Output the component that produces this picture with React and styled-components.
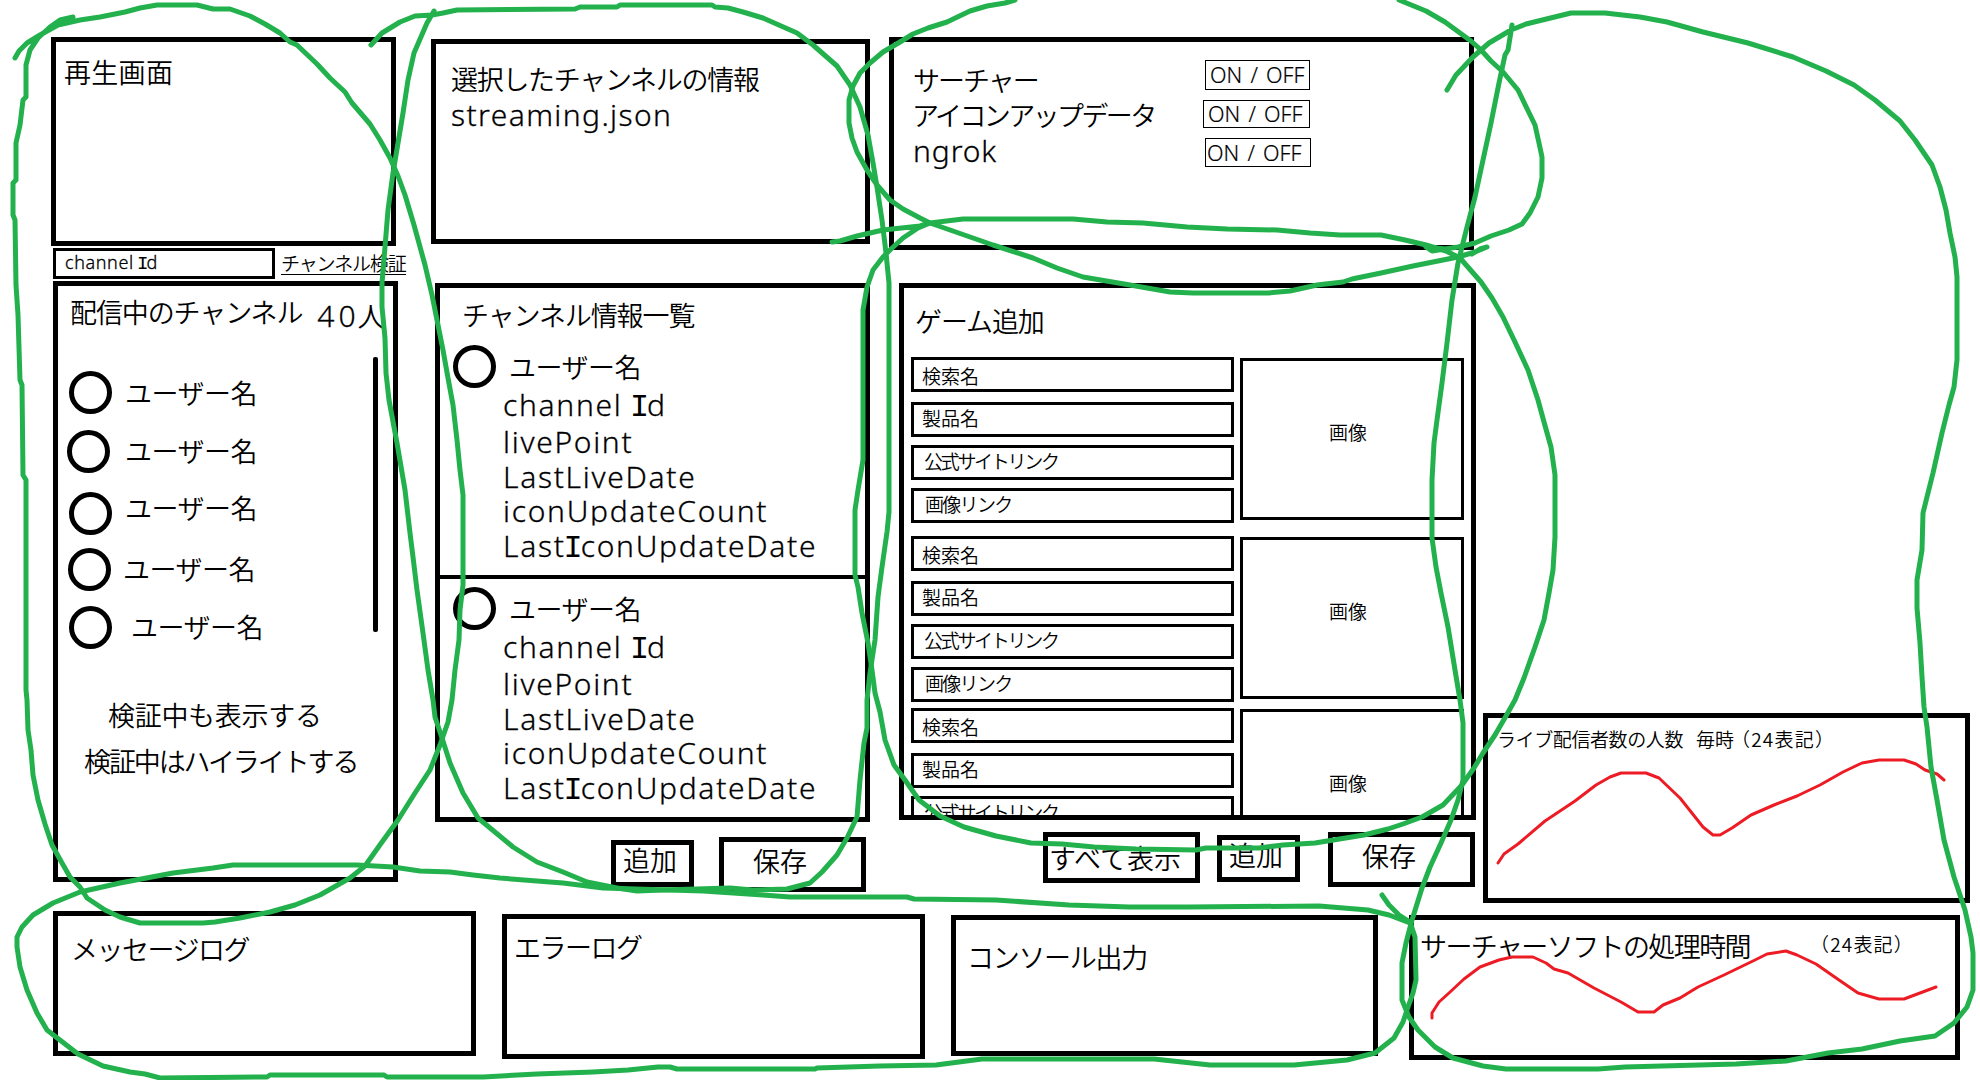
import React from "react";
import styled, { createGlobalStyle } from "styled-components";

const GlobalStyle = createGlobalStyle`
  * { box-sizing: border-box; }
  html, body { margin: 0; padding: 0; background: #fff; }
  body { overflow: hidden; }
`;

const JP = `"Noto Sans CJK JP", "Noto Sans", sans-serif`;
const LATIN = `"Noto Sans", "Noto Sans CJK JP", sans-serif`;

const Board = styled.main`
  position: relative;
  display: flex;
  flex-direction: column;
  width: 1980px;
  height: 1080px;
  padding-left: 51px;
  overflow: hidden;
  color: #000;
  background: #fff;
  font-family: ${JP};
  font-weight: 350;
`;

const Columns = styled.div`
  display: flex;
  align-items: flex-start;
  height: 911px;
`;

const Column = styled.section`
  display: flex;
  flex-direction: column;
  flex: none;
  width: ${(p) => p.$w}px;
  padding-top: ${(p) => p.$top}px;
  margin-right: ${(p) => p.$gap || 0}px;
`;

const LogRow = styled.footer`
  display: flex;
  align-items: flex-start;
  padding-left: 2px;
`;

const Panel = styled.div`
  display: flex;
  flex: none;
  flex-direction: ${(p) => (p.$row ? "row" : "column")};
  align-items: flex-start;
  width: ${(p) => p.$w}px;
  height: ${(p) => p.$h}px;
  margin: ${(p) => p.$m || "0"};
  padding: ${(p) => p.$pad || "0"};
  border: 5px solid #000;
  overflow: hidden;
`;

const Text = styled.span`
  display: block;
  flex: none;
  font-size: ${(p) => p.$size || 27}px;
  line-height: 1;
  letter-spacing: ${(p) => p.$ls || 0}px;
  margin: ${(p) => p.$m || "0"};
  white-space: pre;
`;

const LatinText = styled(Text)`
  font-family: ${LATIN};
  font-weight: 300;
  -webkit-text-stroke: 0.3px #000;
  line-height: ${(p) => p.$lh || 35}px;
`;

const SerifI = styled.span`
  font-family: "Liberation Mono", monospace;
  font-size: 1.06em;
  line-height: 1;
  letter-spacing: -2px;
  margin-left: -2px;
  -webkit-text-stroke: 0;
`;

const Row = styled.div`
  display: flex;
  align-items: flex-start;
  margin: ${(p) => p.$m || "0"};
`;

const IdInput = styled.div`
  width: 222px;
  height: 31px;
  padding-left: 9px;
  border: 3px solid #000;
`;

const VerifyLink = styled(Text)`
  height: 22px;
  border-bottom: 1px solid #000;
`;

const UserList = styled.div`
  display: flex;
  flex-direction: column;
  width: 315px;
  height: 344px;
  padding-top: 14px;
`;

const UserRow = styled.div`
  display: flex;
  align-items: flex-start;
  height: ${(p) => p.$h}px;
  padding-left: ${(p) => p.$x}px;
`;

const Avatar = styled.div`
  flex: none;
  width: 43px;
  height: 43px;
  border: 5px solid #000;
  border-radius: 50%;
`;

const ScrollThumb = styled.div`
  width: 5px;
  height: 275px;
  border-radius: 2px;
  background: #000;
`;

const ChannelCard = styled.article`
  display: flex;
  align-items: flex-start;
  flex: none;
  width: 100%;
  height: 242px;
  padding: 8px 0 0 13px;
  border-bottom: ${(p) => (p.$last ? "none" : "4px solid #000")};
`;

const ChannelFields = styled.div`
  display: flex;
  flex-direction: column;
  padding: 8px 0 0 7px;
`;

const FieldLine = styled(LatinText)`
  line-height: 34.8px;
  clip-path: inset(0 -4px 3.6px 0);
`;

const Button = styled.div`
  flex: none;
  width: ${(p) => p.$w}px;
  height: ${(p) => p.$h}px;
  margin: ${(p) => p.$m || "0"};
  padding: ${(p) => p.$pad};
  border: 5px solid #000;
`;

const Labels = styled.div`
  display: flex;
  flex-direction: column;
  width: 309px;
  padding: 24px 0 0 19px;
`;

const Switches = styled.div`
  display: flex;
  flex-direction: column;
  gap: 10px;
  padding-top: 18px;
`;

const Switch = styled.div`
  display: flex;
  align-items: center;
  width: ${(p) => p.$w}px;
  height: ${(p) => p.$h}px;
  margin-left: ${(p) => p.$x}px;
  padding-left: ${(p) => p.$pl}px;
  border: 1px solid #000;
`;

const SwitchText = styled(LatinText)`
  word-spacing: 2.6px;
  -webkit-text-stroke: 0.2px #000;
`;

const GameItem = styled.article`
  display: flex;
  flex: none;
  align-items: flex-start;
  gap: 6px;
  height: 166px;
  margin: 0 0 ${(p) => p.$gap}px 7px;
`;

const GameFields = styled.div`
  display: flex;
  flex-direction: column;
  width: 323px;
`;

const GameField = styled.div`
  height: 35px;
  margin-bottom: ${(p) => p.$mb}px;
  padding: ${(p) => p.$pad};
  border: 3px solid #000;
`;

const Thumb = styled.div`
  width: 224px;
  height: 162px;
  margin-top: 1px;
  padding: 61px 0 0 86px;
  border: 3px solid #000;
`;

const ChartPanel = styled(Panel)`
  display: grid;
  padding: 0;
`;

const ChartHead = styled.div`
  grid-area: 1 / 1;
  display: flex;
  align-items: flex-start;
  padding: ${(p) => p.$pad};
`;

const Chart = styled.svg`
  grid-area: 1 / 1;
  display: block;
  width: 100%;
  height: 100%;
  fill: none;
  stroke: #ed1c24;
  stroke-width: 3;
  stroke-linecap: round;
  stroke-linejoin: round;
`;

const Ink = styled.svg`
  position: absolute;
  inset: 0;
  width: 1980px;
  height: 1080px;
  fill: none;
  stroke: #22b14c;
  stroke-width: 5;
  stroke-linecap: round;
  stroke-linejoin: round;
  pointer-events: none;
`;

const USERS = [
  { x: 11, h: 59, gap: 13, top: 8 },
  { x: 9, h: 62, gap: 15, top: 7 },
  { x: 11, h: 56, gap: 13, top: 2 },
  { x: 10, h: 58, gap: 12, top: 7 },
  { x: 11, h: 43, gap: 19, top: 7 },
];

const GAME_FIELDS = [
  { label: "検索名", pad: "6px 0 0 8px", mb: 10, ls: 0 },
  { label: "製品名", pad: "3px 0 0 8px", mb: 8, ls: 0 },
  { label: "公式サイトリンク", pad: "3px 0 0 10px", mb: 8, ls: -2.3 },
  { label: "画像リンク", pad: "3px 0 0 11px", mb: 0, ls: -1.7 },
];

const VIEWERS =
  "1498,863 1504,854 1518,844 1545,821 1575,801 1596,785 1610,777 1621,773 1646,773 1659,778 1680,798 1703,827 1713,835 1720,835 1732,828 1751,815 1774,805 1797,796 1820,785 1843,772 1862,763 1879,760 1904,760 1916,764 1925,770 1937,774 1944,780";

const TIMES =
  "1432,1018 1432,1013 1439,1002 1449,993 1464,979 1480,967 1499,960 1512,957 1533,957 1546,963 1554,969 1568,973 1594,988 1621,1002 1638,1012 1654,1012 1663,1005 1680,998 1698,987 1724,975 1755,960 1767,954 1786,951 1797,955 1816,964 1839,980 1858,993 1879,999 1904,999 1920,993 1936,987";

const INK = [
  // left column
  "15,58 19,51 27,43 40,35 58,25 80,20 100,17 125,12 140,8 157,5 197,5 213,9 230,9 250,16 265,24 280,33 290,42 297,45 317,64 330,78 345,92 352,103 370,124 380,140 390,158 398,176 405,195 414,225 425,265 432,295 437,320 443,350 448,378 453,405 457,440 460,470 463,495 463,585 460,610 459,640 455,670 452,700 448,722 440,745 430,770 415,793 398,820 382,842 365,866 350,878 320,895 295,905 270,912 240,918 215,922 203,923 140,923 120,917 105,910 87,898 80,887 70,877 62,863 52,845 45,824 38,800 33,775 31,750 28,730 27,700 26,690 26,480 23,475 22,385 20,380 18,315 16,285 15,220 13,215 13,183 16,180 16,143 20,125 23,100 26,97 26,65 30,50 38,38 50,27 60,20 73,17",
  // second column
  "371,45 382,33 400,22 415,16 432,15 443,13 457,10 575,9 580,7 617,7 620,5 712,5 715,7 728,8 743,12 763,18 797,33 813,45 837,66 850,85 860,107 868,135 873,163 877,187 882,220 886,253 889,283 889,512 887,532 882,567 878,597 875,640 870,673 867,700 867,728 864,743 860,780 857,817 847,838 837,855 822,872 810,883 787,889 753,890 730,888 663,890 637,891 617,888 587,882 563,872 537,862 513,847 478,818 463,793 450,763 442,738 435,717 433,700 428,670 423,633 417,590 413,557 410,533 405,490 397,443 389,400 386,373 385,338 382,307 382,283 385,247 388,210 393,173 398,143 403,113 408,80 414,53 427,23 434,11",
  // switches panel
  "1015,0 1005,3 987,6 970,11 947,22 928,28 913,34 900,42 883,52 870,63 860,73 853,86 849,100 849,123 852,138 857,152 867,170 877,185 890,200 903,209 920,218 930,223 973,238 993,245 1033,258 1057,268 1083,277 1130,285 1170,292 1193,293 1268,293 1290,291 1317,285 1343,282 1352,279 1381,273 1413,266 1458,257 1475,252 1487,247 1480,249 1472,254",
  "1399,0 1426,11 1445,22 1460,33 1471,41 1481,50 1491,61 1503,72 1518,90 1535,125 1539,143 1542,157 1542,178 1538,197 1530,213 1522,224 1509,230 1491,236 1475,243 1458,247 1432,251 1426,247 1446,249",
  // game panel
  "832,242 840,241 857,236 883,230 920,226 930,223 963,219 1073,219 1107,222 1143,223 1187,227 1227,229 1277,230 1310,233 1340,235 1381,235 1405,240 1426,245 1446,251 1460,258 1481,282 1492,298 1503,317 1515,342 1528,370 1538,400 1544,422 1551,447 1555,475 1555,537 1553,570 1549,593 1544,620 1535,647 1524,678 1515,700 1506,716 1495,735 1483,753 1474,768 1462,785 1443,805 1422,817 1403,824 1388,829 1364,835 1315,843 1283,845 1259,848 1206,848 1196,850 1136,849 1094,847 1062,844 1031,843 996,836 964,827 940,816 919,800 905,780 894,765 885,740 880,712 875,693 872,670 868,643 862,613 858,587 855,575 855,510 858,490 863,460 863,310 867,287 873,270 883,257 890,250 903,238 918,228 930,223",
  // right column
  "1447,90 1456,75 1473,57 1489,43 1511,30 1526,24 1571,13 1605,13 1640,17 1667,22 1703,32 1748,43 1793,57 1826,71 1854,85 1875,100 1900,121 1915,140 1932,165 1940,187 1946,210 1950,233 1955,257 1957,277 1957,360 1954,387 1949,405 1942,433 1933,473 1923,513 1922,550 1917,580 1917,608 1920,643 1922,677 1924,707 1927,727 1931,767 1937,800 1944,840 1954,877 1965,910 1971,937 1973,953 1973,990 1967,1007 1954,1023 1935,1036 1900,1041 1862,1049 1828,1053 1786,1061 1736,1064 1625,1067 1598,1069 1506,1069 1483,1066 1453,1058 1435,1047 1418,1030 1409,1017 1402,1000 1402,963 1406,943 1412,920 1422,888 1430,867 1441,843 1451,820 1458,800 1463,780 1463,723 1460,700 1455,670 1448,627 1441,593 1436,567 1432,538 1432,480 1434,443 1437,420 1442,383 1447,343 1452,300 1458,263 1467,227 1475,197 1483,160 1491,123 1499,83 1505,55 1508,50 1512,25",
  // log row
  "1382,895 1389,905 1399,915 1410,922 1415,937 1416,980 1413,993 1408,1007 1403,1022 1394,1038 1375,1053 1347,1060 1294,1065 1210,1065 1182,1062 1154,1059 982,1059 936,1065 880,1066 817,1068 815,1069 677,1069 670,1067 658,1067 628,1070 593,1072 537,1074 483,1077 387,1077 384,1075 270,1075 267,1077 160,1078 145,1074 130,1072 103,1066 78,1054 47,1030 37,1013 27,990 20,967 17,947 17,937 22,927 33,915 53,903 80,892 120,883 173,873 213,868 233,865 357,865 393,867 420,871 450,872 473,875 500,878 537,881 563,883 603,888 703,891 763,895 790,897 907,897 914,899 996,900 1069,905 1129,907 1189,907 1319,906 1368,910 1389,915 1410,923",
];

const FIELD_LINES = [
  <>channel <SerifI>I</SerifI>d</>,
  <>livePoint</>,
  <>LastLiveDate</>,
  <>iconUpdateCount</>,
  <>Last<SerifI>I</SerifI>conUpdateDate</>,
];

function Channel({ last }) {
  return (
    <ChannelCard $last={last}>
      <Avatar />
      <ChannelFields>
        <Text $ls={-0.5} $m="0 0 8px 6px">ユーザー名</Text>
        {FIELD_LINES.map((line, i) => (
          <FieldLine key={i} $size={30} $ls={1.7}>{line}</FieldLine>
        ))}
      </ChannelFields>
    </ChannelCard>
  );
}

function Game({ gap }) {
  return (
    <GameItem $gap={gap}>
      <GameFields>
        {GAME_FIELDS.map((f) => (
          <GameField key={f.label} $pad={f.pad} $mb={f.mb}>
            <Text $size={19} $ls={f.ls}>{f.label}</Text>
          </GameField>
        ))}
      </GameFields>
      <Thumb>
        <Text $size={19}>画像</Text>
      </Thumb>
    </GameItem>
  );
}

export default function App() {
  return (
    <>
      <GlobalStyle />
      <Board>
        <Columns>
          <Column $w={347} $top={37} $gap={33}>
            <Panel $w={345} $h={209} $pad="16px 0 0 8px">
              <Text $ls={0.3}>再生画面</Text>
            </Panel>
            <Row $m="2px -20px 2px 2px">
              <IdInput>
                <LatinText $size={18} $lh={23} $ls={0.6}>channel <SerifI>I</SerifI>d</LatinText>
              </IdInput>
              <VerifyLink $size={19} $ls={-1.1} $m="5px 0 0 6px">チャンネル検証</VerifyLink>
            </Row>
            <Panel $w={345} $h={601} $m="0 0 0 2px" $pad="12px 0 0 0">
              <Row $m="0 0 28px 12px">
                <Text $ls={-1.1}>配信中のチャンネル</Text>
                <LatinText $size={30} $lh={27} $ls={4} $m="4px 0 0 15px">40</LatinText>
                <Text $m="4px 0 0 -2px">人</Text>
              </Row>
              <Row>
                <UserList>
                  {USERS.map((u, i) => (
                    <UserRow key={i} $h={u.h} $x={u.x}>
                      <Avatar />
                      <Text $ls={-0.5} $m={`${u.top}px 0 0 ${u.gap}px`}>ユーザー名</Text>
                    </UserRow>
                  ))}
                </UserList>
                <ScrollThumb />
              </Row>
              <Text $ls={-0.3} $m="0 0 19px 50px">検証中も表示する</Text>
              <Text $ls={-2.1} $m="0 0 0 26px">検証中はハイライトする</Text>
            </Panel>
          </Column>

          <Column $w={439} $top={39} $gap={19}>
            <Panel $w={439} $h={205} $pad="21px 0 0 15px">
              <Text $ls={-1.3}>選択したチャンネルの情報</Text>
              <LatinText $size={30} $ls={1.4} $m="5px 0 0 0">streaming.json</LatinText>
            </Panel>
            <Panel $w={435} $h={539} $m="39px 0 15px 4px" $pad="13px 0 0 0">
              <Text $ls={-1.1} $m="0 0 9px 22px">チャンネル情報一覧</Text>
              <Channel />
              <Channel last />
            </Panel>
            <Row $m="0 0 0 180px">
              <Button $w={83} $h={47} $m="3px 25px 0 0" $pad="1px 0 0 7px">
                <Text>追加</Text>
              </Button>
              <Button $w={147} $h={55} $pad="5px 0 0 29px">
                <Text>保存</Text>
              </Button>
            </Row>
          </Column>

          <Column $w={587} $top={37} $gap={7}>
            <Panel $row $w={585} $h={213}>
              <Labels>
                <Text $ls={-2}>サーチャー</Text>
                <Text $ls={-2.6} $m="8px 0 0 -1px">アイコンアップデータ</Text>
                <LatinText $size={30} $ls={0.9} $m="5px 0 0 0">ngrok</LatinText>
              </Labels>
              <Switches>
                <Switch $w={105} $h={30} $x={2} $pl={4}>
                  <SwitchText $size={21.5} $lh={28}>ON / OFF</SwitchText>
                </Switch>
                <Switch $w={107} $h={28} $x={0} $pl={4}>
                  <SwitchText $size={21.5} $lh={26}>ON / OFF</SwitchText>
                </Switch>
                <Switch $w={106} $h={29} $x={2} $pl={1}>
                  <SwitchText $size={21.5} $lh={27}>ON / OFF</SwitchText>
                </Switch>
              </Switches>
            </Panel>
            <Panel $w={577} $h={537} $m="33px 0 12px 10px" $pad="19px 0 0 0">
              <Text $ls={-1.1} $m="0 0 23px 11px">ゲーム追加</Text>
              <Game gap={13} />
              <Game gap={6} />
              <Game gap={0} />
            </Panel>
            <Row $m="0 0 0 154px">
              <Button $w={157} $h={51} $pad="7px 0 0 1px">
                <Text>すべて表示</Text>
              </Button>
              <Button $w={83} $h={47} $m="3px 28px 0 17px" $pad="1px 0 0 7px">
                <Text>追加</Text>
              </Button>
              <Button $w={147} $h={55} $pad="5px 0 0 29px">
                <Text>保存</Text>
              </Button>
            </Row>
          </Column>

          <Column $w={487} $top={713}>
            <ChartPanel $w={487} $h={190}>
              <ChartHead $pad="11px 0 0 9px">
                <Text $size={19} $ls={-0.4}>ライブ配信者数の人数</Text>
                <Text $size={19} $m="0 0 0 13px">毎時</Text>
                <Text $size={19} $ls={1.2} $m="0 0 0 -3px">（24表記）</Text>
              </ChartHead>
              <Chart viewBox="1488 718 477 180">
                <polyline points={VIEWERS} />
              </Chart>
            </ChartPanel>
          </Column>
        </Columns>

        <LogRow>
          <Panel $w={423} $h={145} $pad="19px 0 0 13px">
            <Text $ls={-1.5}>メッセージログ</Text>
          </Panel>
          <Panel $w={423} $h={145} $m="3px 0 0 26px" $pad="14px 0 0 7px">
            <Text $ls={-1.5}>エラーログ</Text>
          </Panel>
          <Panel $w={427} $h={141} $m="4px 0 0 26px" $pad="23px 0 0 11px">
            <Text $ls={-1.3}>コンソール出力</Text>
          </Panel>
          <ChartPanel $w={551} $h={145} $m="4px 0 0 31px">
            <ChartHead $pad="12px 0 0 6px">
              <Text $ls={-1.6}>サーチャーソフトの処理時間</Text>
              <Text $size={19} $ls={1.2} $m="2px 0 0 60px">（24表記）</Text>
            </ChartHead>
            <Chart viewBox="1414 920 541 135">
              <polyline points={TIMES} />
            </Chart>
          </ChartPanel>
        </LogRow>

        <Ink viewBox="0 0 1980 1080">
          {INK.map((points, i) => (
            <polyline key={i} points={points} />
          ))}
        </Ink>
      </Board>
    </>
  );
}
